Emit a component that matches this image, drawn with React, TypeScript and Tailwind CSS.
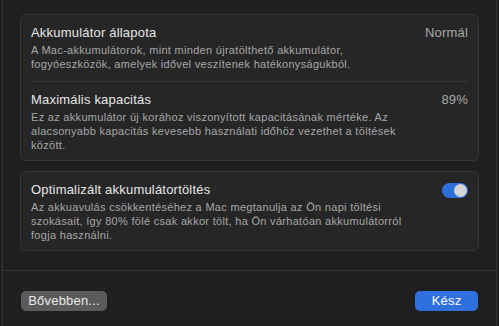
export default function App() {
  const rows = [
    {
      title: "Akkumulátor állapota",
      value: "Normál",
      text: "A Mac-akkumulátorok, mint minden újratölthető akkumulátor, fogyóeszközök, amelyek idővel veszítenek hatékonyságukból.",
    },
    {
      title: "Maximális kapacitás",
      value: "89%",
      text: "Ez az akkumulátor új korához viszonyított kapacitásának mértéke. Az alacsonyabb kapacitás kevesebb használati időhöz vezethet a töltések között.",
    },
  ]

  return (
    <div
      className="h-[326px] w-[499px] overflow-hidden bg-[#1f1f1f] px-[2px]"
      style={{ fontFamily: '"Liberation Sans", Arial, sans-serif' }}
    >
      <div className="flex h-full flex-col border-x border-[#353535]">
        <div className="flex flex-col gap-[10px] px-[17px] pt-[14px]">
          <div className="rounded-[6px] border border-[#363636] bg-[#262626] px-[10px]">
            {rows.map((row, i) => (
              <div
                key={i}
                className={
                  i === 0
                    ? "border-b border-[#363636] pb-[10px] pt-[10px]"
                    : "pb-[8px] pt-[10px]"
                }
              >
                <div className="flex items-center justify-between">
                  <span className="text-[13px] leading-[16px] tracking-[0.2px] text-[#e6e6e6]">{row.title}</span>
                  <span className="text-[13px] leading-[16px] tracking-[0.2px] text-[#a8a8a8]">{row.value}</span>
                </div>
                <p className="mt-[2px] max-w-[385px] text-[11px] leading-[14px] tracking-[0.3px] text-[#a6a6a6]">
                  {row.text}
                </p>
              </div>
            ))}
          </div>

          <div className="rounded-[6px] border border-[#363636] bg-[#262626] px-[10px] pb-[8px] pt-[10px]">
            <div className="flex items-center justify-between">
              <span className="text-[13px] leading-[16px] tracking-[0.2px] text-[#e6e6e6]">
                Optimalizált akkumulátortöltés
              </span>
              <div className="flex h-[15px] w-[26px] items-center justify-end rounded-full bg-[#2f6fdb] pr-[1px]">
                <div className="h-[13px] w-[13px] rounded-full bg-[#d4d4d4]" />
              </div>
            </div>
            <p className="mt-[2px] max-w-[385px] text-[11px] leading-[14px] tracking-[0.3px] text-[#a6a6a6]">
              Az akkuavulás csökkentéséhez a Mac megtanulja az Ön napi töltési szokásait, így 80% fölé csak akkor tölt, ha
              Ön várhatóan akkumulátorról fogja használni.
            </p>
          </div>
        </div>

        <div className="mt-[19px] flex items-start justify-between border-t border-[#353535] px-[18px] pt-[20px]">
          <button className="h-[20px] w-[86px] rounded-[5px] bg-[#5b5b5b] text-[13px] leading-[20px] tracking-[0.2px] text-[#e8e8e8]">
            Bővebben...
          </button>
          <button className="h-[20px] w-[63px] rounded-[5px] bg-[#3070de] text-[13px] leading-[20px] tracking-[0.2px] text-white">
            Kész
          </button>
        </div>
      </div>
    </div>
  )
}
